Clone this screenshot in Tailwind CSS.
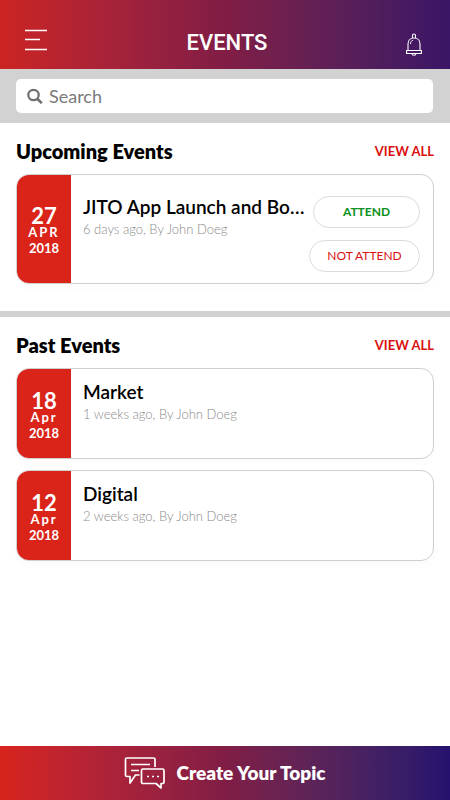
<!DOCTYPE html>
<html lang="en">
<head>
    <meta charset="UTF-8">
    <meta name="viewport" content="width=device-width, initial-scale=1.0">
    <title>Events</title>
    <script src="https://cdn.jsdelivr.net/npm/@tailwindcss/browser@4"></script>
</head>
<body class="flex min-h-screen flex-col bg-white font-['Lato',sans-serif] text-black">
    <!-- Header -->
    <header class="grid h-[69px] grid-cols-3 bg-linear-to-r from-[#cc2420] via-[#811d45] to-[#3a1466] pl-6 pr-5 pt-4">
        <button type="button" aria-label="Menu" class="self-center justify-self-start pb-1 text-white">
            <svg class="h-6 w-6" viewBox="0 0 24 24" fill="none" stroke="currentColor" stroke-width="1.3">
                <path d="M1 1.500h22M1 10.500h15M1 20.500h22"/>
            </svg>
        </button>
        <h1 class="self-center justify-self-center font-['Roboto',sans-serif] text-[22px] font-medium leading-7 text-white">EVENTS</h1>
        <button type="button" aria-label="Notifications" class="mr-2 self-center justify-self-end pt-1 text-white">
            <svg class="h-6 w-4" viewBox="0 0 16 24" fill="none" stroke="currentColor" stroke-width="1.1">
                <path d="M6.500 5V2.500a1.500 1.500 0 0 1 3 0V5"/>
                <path d="M2 17.500v-6.500C2 7.500 4.500 5 8 5s6 2.500 6 6v6.500"/>
                <path d="M4.500 11c0-2 .8-3.300 2.500-3.800" stroke-width=".9"/>
                <path d="M.6 17.500h14.800v3H.6z"/>
                <path d="M6 20.500c0 2.300 4 2.300 4 0"/>
            </svg>
        </button>
    </header>

    <!-- Search -->
    <div class="bg-[#d2d2d2] py-[10px] pl-4 pr-[17px]">
        <label class="flex h-[34px] items-center gap-[6px] rounded-[5px] bg-white pl-[11px] pr-3 text-[#6f6f6f]">
            <svg class="h-4 w-4 shrink-0" viewBox="0 0 16 16" fill="none" stroke="currentColor" stroke-width="2.2">
                <circle cx="6.500" cy="7" r="5.200"/>
                <path d="M10.300 10.800l4.500 4.400" stroke-width="2.600"/>
            </svg>
            <input type="text" placeholder="Search" aria-label="Search" class="min-w-0 flex-1 text-lg leading-6 outline-none placeholder:text-[#7a7a7a]">
        </label>
    </div>

    <main class="flex-1">
        <!-- Upcoming Events -->
        <section class="border-b-6 border-[#d2d2d2] pb-[27px] pl-4 pr-4 pt-4">
            <div class="mb-[11px] flex items-center justify-between">
                <h2 class="text-xl font-extrabold leading-6">Upcoming Events</h2>
                <a href="#" class="text-[13px] font-bold leading-6 text-[#d9100f]">VIEW ALL</a>
            </div>
            <article class="flex h-[110px] overflow-hidden rounded-[13px] border border-[#cfcfcf] shadow-[0_4px_8px_rgba(0,0,0,0.02)]">
                <div class="flex w-[54px] shrink-0 flex-col items-center justify-center bg-[#da2419] pt-[6px] text-white">
                    <span class="text-[22px] font-bold leading-4">27</span>
                    <span class="text-[13px] font-bold leading-4 tracking-[2px]">APR</span>
                    <span class="text-[13px] font-bold leading-4">2018</span>
                </div>
                <div class="min-w-0 flex-1 pl-3 pt-5">
                    <h3 class="truncate text-[19px] font-semibold leading-6">JITO App Launch and Board Meeting</h3>
                    <p class="text-[13px] font-light leading-5 text-[#8a8a8a]">6 days ago, By John Doeg</p>
                </div>
                <div class="mr-[13px] flex shrink-0 flex-col items-end justify-start gap-3 pt-[21px]">
                    <button type="button" class="h-8 w-[107px] rounded-full border border-[#dcdcdc] text-xs font-bold text-[#0a8f20]">ATTEND</button>
                    <button type="button" class="h-8 w-[111px] rounded-full border border-[#dcdcdc] text-xs text-[#d9100f]">NOT ATTEND</button>
                </div>
            </article>
        </section>

        <!-- Past Events -->
        <section class="pb-6 pl-4 pr-4 pt-4">
            <div class="mb-[11px] flex items-center justify-between">
                <h2 class="text-xl font-extrabold leading-6">Past Events</h2>
                <a href="#" class="text-[13px] font-bold leading-6 text-[#d9100f]">VIEW ALL</a>
            </div>
            <div class="flex flex-col gap-[11px]">
                <article class="flex h-[91px] overflow-hidden rounded-[13px] border border-[#cfcfcf] shadow-[0_4px_8px_rgba(0,0,0,0.02)]">
                    <div class="flex w-[54px] shrink-0 flex-col items-center justify-center bg-[#da2419] pt-[6px] text-white">
                        <span class="text-[22px] font-bold leading-4">18</span>
                        <span class="text-[13px] font-bold leading-4 tracking-[2px]">Apr</span>
                        <span class="text-[13px] font-bold leading-4">2018</span>
                    </div>
                    <div class="min-w-0 flex-1 pl-3 pt-[11px]">
                        <h3 class="truncate text-[19px] font-semibold leading-6">Market</h3>
                        <p class="text-[13px] font-light leading-5 text-[#8a8a8a]">1 weeks ago, By John Doeg</p>
                    </div>
                </article>
                <article class="flex h-[91px] overflow-hidden rounded-[13px] border border-[#cfcfcf] shadow-[0_4px_8px_rgba(0,0,0,0.02)]">
                    <div class="flex w-[54px] shrink-0 flex-col items-center justify-center bg-[#da2419] pt-[6px] text-white">
                        <span class="text-[22px] font-bold leading-4">12</span>
                        <span class="text-[13px] font-bold leading-4 tracking-[2px]">Apr</span>
                        <span class="text-[13px] font-bold leading-4">2018</span>
                    </div>
                    <div class="min-w-0 flex-1 pl-3 pt-[11px]">
                        <h3 class="truncate text-[19px] font-semibold leading-6">Digital</h3>
                        <p class="text-[13px] font-light leading-5 text-[#8a8a8a]">2 weeks ago, By John Doeg</p>
                    </div>
                </article>
            </div>
        </section>
    </main>

    <!-- Create Topic -->
    <button type="button" class="flex h-[54px] w-full items-center justify-center gap-[10px] bg-linear-to-r from-[#d8241b] via-[#811d45] to-[#26126f] text-white">
        <svg class="h-8 w-[42px]" viewBox="0 0 42 32" fill="none" stroke="currentColor" stroke-width="1.7" stroke-linejoin="round">
            <path d="M15.500 18h-4L6 26v-6.500H3A1.500 1.500 0 0 1 1.500 18V2.500A1.500 1.500 0 0 1 3 1h26.500A1.500 1.500 0 0 1 31 2.500V10"/>
            <path d="M7 7.500h19M7 13.500h8"/>
            <path d="M19 12h19.500a1.500 1.500 0 0 1 1.500 1.500v11.500a1.500 1.500 0 0 1-1.500 1.500H37V31l-5-4.500H19a1.500 1.500 0 0 1-1.500-1.500V13.500A1.500 1.500 0 0 1 19 12z"/>
            <path d="M23 19.500h2M28 19.500h2M33 19.500h2"/>
        </svg>
        <span class="text-[19px] font-extrabold leading-6">Create Your Topic</span>
    </button>
</body>
</html>
